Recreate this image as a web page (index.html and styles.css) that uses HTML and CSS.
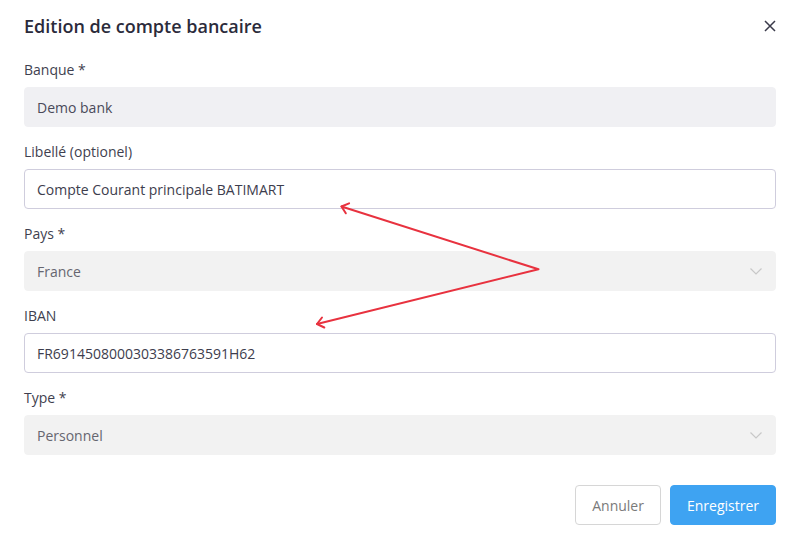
FILE: index.html
```html
<!DOCTYPE html>
<html lang="fr">
<head>
<meta charset="utf-8">
<title>Edition de compte bancaire</title>
<link rel="stylesheet" href="styles.css">
</head>
<body>
<div class="modal">
  <div class="header">
    <h1 class="title">Edition de compte bancaire</h1>
    <button class="close" aria-label="Fermer">
      <svg width="12" height="12" viewBox="0 0 12 12"><path d="M1 1 L11 11 M11 1 L1 11" stroke="#3a3a4a" stroke-width="1.5" fill="none"/></svg>
    </button>
  </div>
  <div class="field">
    <label class="label">Banque *</label>
    <div class="input disabled">Demo bank</div>
  </div>
  <div class="field">
    <label class="label">Libellé (optionel)</label>
    <div class="input">Compte Courant principale BATIMART</div>
  </div>
  <div class="field">
    <label class="label">Pays *</label>
    <div class="input select">
      <span>France</span>
      <svg class="chev" width="12" height="7" viewBox="0 0 12 7"><path d="M0.5 0.5 L6 6 L11.5 0.5" stroke="#c8c8c8" stroke-width="1.2" fill="none"/></svg>
    </div>
  </div>
  <div class="field">
    <label class="label">IBAN</label>
    <div class="input">FR6914508000303386763591H62</div>
  </div>
  <div class="field">
    <label class="label">Type *</label>
    <div class="input select">
      <span>Personnel</span>
      <svg class="chev" width="12" height="7" viewBox="0 0 12 7"><path d="M0.5 0.5 L6 6 L11.5 0.5" stroke="#c8c8c8" stroke-width="1.2" fill="none"/></svg>
    </div>
  </div>
  <div class="footer">
    <button class="btn btn-cancel">Annuler</button>
    <button class="btn btn-primary">Enregistrer</button>
  </div>
</div>
<svg class="annot" width="797" height="540" viewBox="0 0 797 540">
  <g stroke="#e8323f" stroke-width="2" fill="none" stroke-linecap="round" stroke-linejoin="round">
    <path d="M341.5 206.5 L538.5 269.3 L317 324"/>
    <path d="M349.1 203.4 L341.5 206.5 L345.8 213.3"/>
    <path d="M322 317.5 L317 324 L324.3 327.5"/>
  </g>
</svg>
</body>
</html>
```

FILE: styles.css
```css
* { box-sizing: border-box; }
html, body {
  margin: 0;
  padding: 0;
  background: #ffffff;
  font-family: "Open Sans", "Noto Sans", sans-serif;
}
body { position: relative; width: 797px; height: 540px; overflow: hidden; }
.modal {
  padding: 14px 21px 0 24px;
}
.header {
  display: flex;
  justify-content: space-between;
  align-items: center;
  height: 24px;
  margin-bottom: 22px;
}
.title {
  margin: 0;
  font-size: 18px;
  line-height: 24px;
  font-weight: 600;
  color: #2b2b3b;
}
.close {
  border: 0;
  background: none;
  padding: 0;
  width: 12px;
  height: 12px;
  display: flex;
  cursor: pointer;
}
.field {
  display: flex;
  flex-direction: column;
  margin-bottom: 15px;
}
.label {
  font-size: 14px;
  line-height: 20px;
  color: #3f3f4f;
  margin-bottom: 7px;
}
.input {
  height: 40px;
  border: 1px solid #cfcddd;
  border-radius: 4px;
  padding: 0 12px;
  display: flex;
  align-items: center;
  font-size: 14px;
  color: #3d3d4d;
  background: #fff;
}
.input.disabled {
  background: #f0f0f3;
  border-color: #f0f0f3;
  color: #4a4a5a;
}
.input.select {
  background: #f2f2f2;
  border-color: #f2f2f2;
  color: #666670;
  justify-content: space-between;
}
.chev { margin-right: 1px; }
.footer {
  display: flex;
  justify-content: flex-end;
  gap: 9px;
  margin-top: 30px;
}
.btn {
  height: 40px;
  border-radius: 4px;
  padding: 0 16px;
  font-family: "Open Sans", "Noto Sans", sans-serif;
  font-size: 14px;
  cursor: pointer;
}
.btn-cancel {
  background: #fff;
  border: 1px solid #d6d6d6;
  color: #7a7a7a;
}
.btn-primary {
  background: #3ea3f2;
  border: 1px solid #3ea3f2;
  color: #fff;
}
.annot {
  position: absolute;
  left: 0;
  top: 0;
  pointer-events: none;
}
```
